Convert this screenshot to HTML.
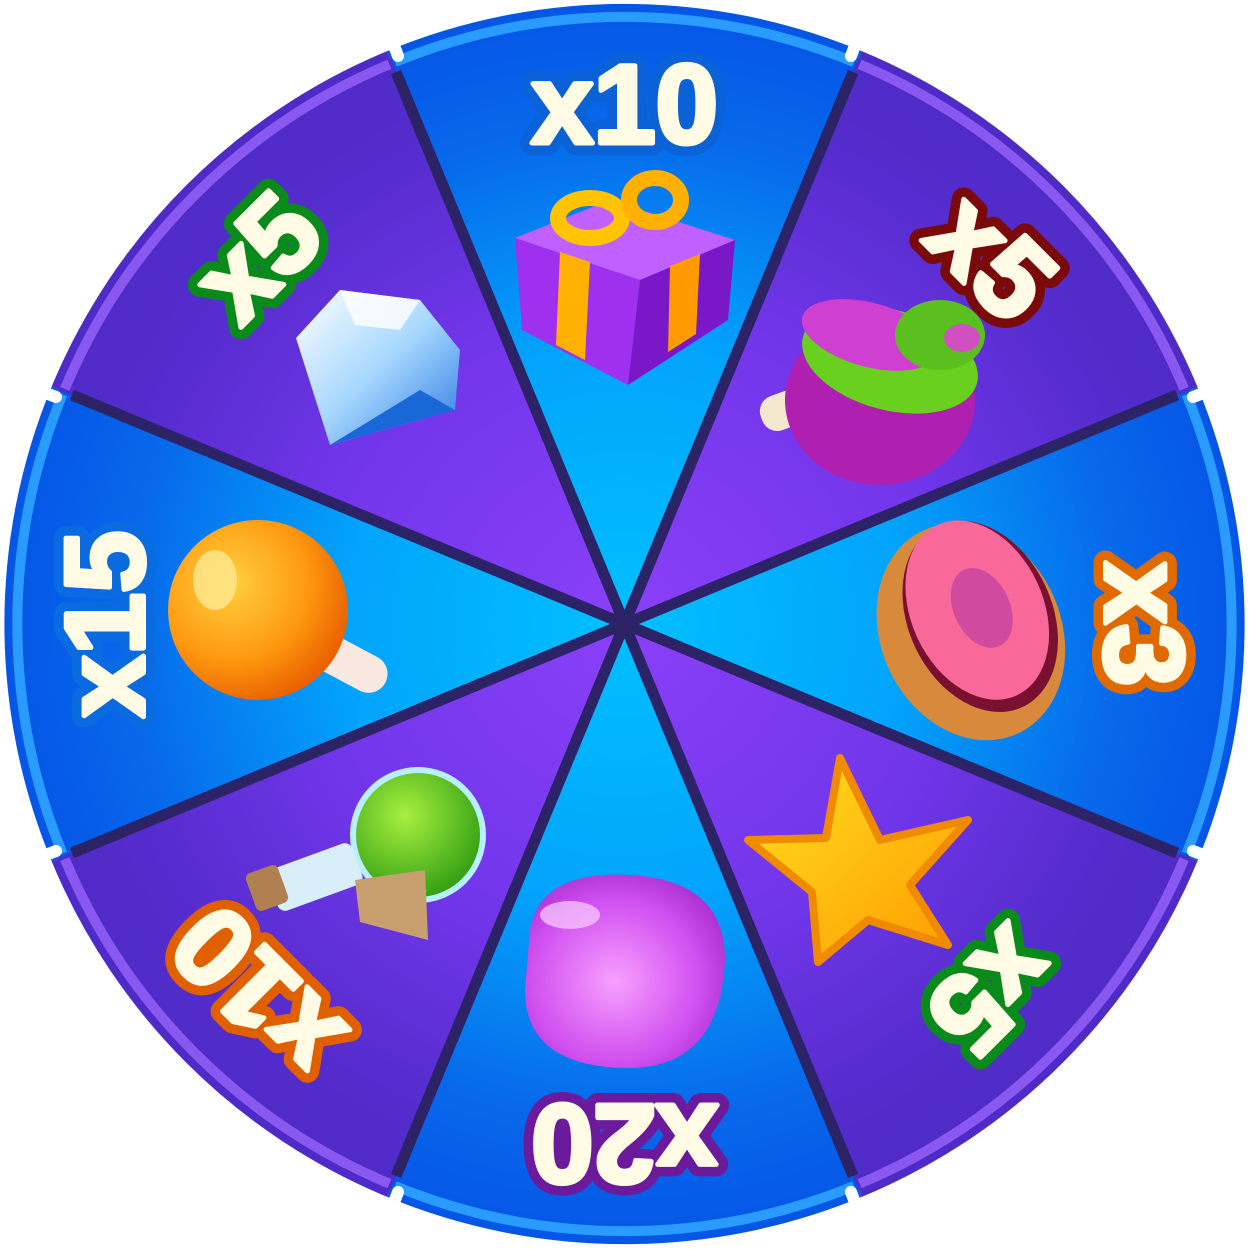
<!DOCTYPE html>
<html><head><meta charset="utf-8"><style>html,body{margin:0;padding:0;background:#fff}svg{display:block}</style></head>
<body>
<svg width="1249" height="1249" viewBox="0 0 1249 1249" xmlns="http://www.w3.org/2000/svg">
<defs>
<radialGradient id="gb" gradientUnits="userSpaceOnUse" cx="624.5" cy="624" r="620">
<stop offset="0" stop-color="#00c0ff"/><stop offset="0.45" stop-color="#03a4fb"/><stop offset="0.8" stop-color="#0768ea"/><stop offset="1" stop-color="#0656e6"/></radialGradient>
<radialGradient id="gp" gradientUnits="userSpaceOnUse" cx="624.5" cy="624" r="620">
<stop offset="0" stop-color="#8a40f8"/><stop offset="0.5" stop-color="#7236ea"/><stop offset="0.85" stop-color="#542ccc"/><stop offset="1" stop-color="#4e2bc6"/></radialGradient>
<radialGradient id="org" cx="0.35" cy="0.35" r="0.7"><stop offset="0" stop-color="#ffd040"/><stop offset="0.6" stop-color="#ff9a10"/><stop offset="1" stop-color="#e86000"/></radialGradient>
<radialGradient id="grn" cx="0.4" cy="0.35" r="0.7"><stop offset="0" stop-color="#a8f040"/><stop offset="1" stop-color="#2c9a10"/></radialGradient>
<radialGradient id="pur" cx="0.45" cy="0.55" r="0.7"><stop offset="0" stop-color="#f8a0ff"/><stop offset="0.6" stop-color="#d050f0"/><stop offset="1" stop-color="#9a20c0"/></radialGradient>
<linearGradient id="str" x1="0" y1="0" x2="1" y2="1"><stop offset="0" stop-color="#ffe020"/><stop offset="1" stop-color="#ff9a00"/></linearGradient>
<linearGradient id="dia" x1="0" y1="0" x2="1" y2="1"><stop offset="0" stop-color="#ffffff"/><stop offset="0.5" stop-color="#a8d8ff"/><stop offset="1" stop-color="#2a78e0"/></linearGradient>
</defs>
<circle cx="624.5" cy="624" r="612" fill="#2c2266"/>
<g>
<path d="M624.5 624 L387.2 51.1 A620 620 0 0 1 861.8 51.1 Z" fill="url(#gb)"/>
<path d="M624.5 624 L387.2 51.1 A620 620 0 0 1 861.8 51.1 Z" fill="url(#gp)" transform="rotate(45 624.5 624)"/>
<path d="M624.5 624 L387.2 51.1 A620 620 0 0 1 861.8 51.1 Z" fill="url(#gb)" transform="rotate(90 624.5 624)"/>
<path d="M624.5 624 L387.2 51.1 A620 620 0 0 1 861.8 51.1 Z" fill="url(#gp)" transform="rotate(135 624.5 624)"/>
<path d="M624.5 624 L387.2 51.1 A620 620 0 0 1 861.8 51.1 Z" fill="url(#gb)" transform="rotate(180 624.5 624)"/>
<path d="M624.5 624 L387.2 51.1 A620 620 0 0 1 861.8 51.1 Z" fill="url(#gp)" transform="rotate(225 624.5 624)"/>
<path d="M624.5 624 L387.2 51.1 A620 620 0 0 1 861.8 51.1 Z" fill="url(#gb)" transform="rotate(270 624.5 624)"/>
<path d="M624.5 624 L387.2 51.1 A620 620 0 0 1 861.8 51.1 Z" fill="url(#gp)" transform="rotate(315 624.5 624)"/>
</g>
<g fill="none" stroke-width="10">
<path d="M395 62 A606 606 0 0 1 854 62" stroke="#2a9cff"/>
<path d="M395 62 A606 606 0 0 1 854 62" stroke="#8858f0" transform="rotate(45 624.5 624)"/>
<path d="M395 62 A606 606 0 0 1 854 62" stroke="#2a9cff" transform="rotate(90 624.5 624)"/>
<path d="M395 62 A606 606 0 0 1 854 62" stroke="#8858f0" transform="rotate(135 624.5 624)"/>
<path d="M395 62 A606 606 0 0 1 854 62" stroke="#2a9cff" transform="rotate(180 624.5 624)"/>
<path d="M395 62 A606 606 0 0 1 854 62" stroke="#8858f0" transform="rotate(225 624.5 624)"/>
<path d="M395 62 A606 606 0 0 1 854 62" stroke="#2a9cff" transform="rotate(270 624.5 624)"/>
<path d="M395 62 A606 606 0 0 1 854 62" stroke="#8858f0" transform="rotate(315 624.5 624)"/>
</g>
<g stroke="#2c2266" stroke-width="11">
<line x1="624.5" y1="624" x2="396" y2="72"/><line x1="624.5" y1="624" x2="853" y2="72"/>
<line x1="624.5" y1="624" x2="72" y2="395"/><line x1="624.5" y1="624" x2="1177" y2="395"/>
<line x1="624.5" y1="624" x2="72" y2="853"/><line x1="624.5" y1="624" x2="1177" y2="853"/>
<line x1="624.5" y1="624" x2="396" y2="1176"/><line x1="624.5" y1="624" x2="853" y2="1176"/>
</g>
<g stroke="#fff" stroke-width="12" stroke-linecap="round">
<line x1="398" y1="56" x2="385" y2="22"/><line x1="851" y1="56" x2="864" y2="22"/>
<line x1="56" y1="397" x2="22" y2="384"/><line x1="1193" y1="397" x2="1227" y2="384"/>
<line x1="56" y1="851" x2="22" y2="864"/><line x1="1193" y1="851" x2="1227" y2="864"/>
<line x1="398" y1="1192" x2="385" y2="1226"/><line x1="851" y1="1192" x2="864" y2="1226"/>
</g>
<g font-family="Liberation Sans, sans-serif" font-weight="bold" font-size="112" text-anchor="middle" stroke-linejoin="round">
<g stroke-width="24">
<text x="624.5" y="143" stroke="#0a62d6" fill="#0a62d6">x10</text>
<text x="624.5" y="143" stroke="#7a0a0a" fill="#7a0a0a" transform="rotate(45 624.5 624)">x5</text>
<text x="624.5" y="143" stroke="#e06a00" fill="#e06a00" transform="rotate(90 624.5 624)">x3</text>
<text x="624.5" y="143" stroke="#0a8a1a" fill="#0a8a1a" transform="rotate(135 624.5 624)">x5</text>
<text x="624.5" y="143" stroke="#6a1a9a" fill="#6a1a9a" transform="rotate(180 624.5 624)">x20</text>
<text x="624.5" y="143" stroke="#e06000" fill="#e06000" transform="rotate(225 624.5 624)">x10</text>
<text x="624.5" y="143" stroke="#0a6ae0" fill="#0a6ae0" transform="rotate(270 624.5 624)">x15</text>
<text x="624.5" y="143" stroke="#0a8a1a" fill="#0a8a1a" transform="rotate(315 624.5 624)">x5</text>
</g>
<g fill="#fffbe4" stroke="#fffbe4" stroke-width="5">
<text x="624.5" y="143">x10</text>
<text x="624.5" y="143" transform="rotate(45 624.5 624)">x5</text>
<text x="624.5" y="143" transform="rotate(90 624.5 624)">x3</text>
<text x="624.5" y="143" transform="rotate(135 624.5 624)">x5</text>
<text x="624.5" y="143" transform="rotate(180 624.5 624)">x20</text>
<text x="624.5" y="143" transform="rotate(225 624.5 624)">x10</text>
<text x="624.5" y="143" transform="rotate(270 624.5 624)">x15</text>
<text x="624.5" y="143" transform="rotate(315 624.5 624)">x5</text>
</g>
</g>
<g>
<path d="M515 238 L610 200 L735 240 L640 280 Z" fill="#c060ff"/>
<path d="M515 238 L640 280 L628 385 L522 330 Z" fill="#a030f0"/>
<path d="M640 280 L735 240 L728 320 L628 385 Z" fill="#7a18c8"/>
<path d="M560 252 L590 262 L585 360 L556 345 Z" fill="#ffb000"/>
<path d="M670 266 L700 254 L696 334 L668 352 Z" fill="#ff9a00"/>
<ellipse cx="590" cy="218" rx="32" ry="20" fill="none" stroke="#ffc400" stroke-width="16"/>
<ellipse cx="655" cy="200" rx="26" ry="22" fill="none" stroke="#ffb000" stroke-width="16"/>
</g>
<g>
<rect x="760" y="392" width="50" height="36" rx="16" fill="#f4e8d0" transform="rotate(-20 785 410)"/>
<ellipse cx="880" cy="400" rx="95" ry="85" fill="#b020b0"/>
<ellipse cx="890" cy="360" rx="90" ry="50" fill="#6ad020" transform="rotate(15 890 360)"/>
<ellipse cx="870" cy="335" rx="70" ry="32" fill="#d040d0" transform="rotate(15 870 335)"/>
<ellipse cx="940" cy="335" rx="45" ry="35" fill="#5ac020"/>
<ellipse cx="962" cy="338" rx="18" ry="14" fill="#d050c0"/>
</g>
<g transform="rotate(-25 970 630)">
<ellipse cx="970" cy="632" rx="90" ry="112" fill="#d88a3c"/>
<ellipse cx="985" cy="622" rx="72" ry="100" fill="#7a1030"/>
<ellipse cx="985" cy="615" rx="66" ry="94" fill="#f86898"/>
<ellipse cx="990" cy="615" rx="28" ry="42" fill="#d04aa0"/>
</g>
<path d="M840 758 L880 840 L968 820 L910 885 L948 945 L868 920 L818 962 L812 892 L748 840 L826 838 Z" fill="url(#str)" stroke="#f08a00" stroke-width="8" stroke-linejoin="round"/>
<path d="M530 930 Q540 870 630 875 Q725 880 725 960 Q720 1070 625 1068 Q525 1066 525 990 Z" fill="url(#pur)"/>
<ellipse cx="570" cy="915" rx="30" ry="14" fill="#fbd0ff" opacity="0.7"/>
<g>
<circle cx="418" cy="835" r="65" fill="url(#grn)" stroke="#b8f0ff" stroke-width="6"/>
<rect x="270" y="855" width="90" height="44" rx="8" fill="#d8eef8" transform="rotate(-20 315 877)"/>
<rect x="250" y="868" width="34" height="40" rx="6" fill="#b08050" transform="rotate(-20 267 888)"/>
<path d="M355 880 L425 870 L428 940 L360 922 Z" fill="#c8a070"/>
</g>
<g>
<rect x="310" y="645" width="80" height="38" rx="19" fill="#f8e8e0" transform="rotate(28 350 664)"/>
<circle cx="258" cy="610" r="90" fill="url(#org)"/>
<ellipse cx="215" cy="580" rx="22" ry="30" fill="#ffe890" opacity="0.8"/>
</g>
<g>
<path d="M296 338 L340 290 L420 300 L460 350 L455 410 L330 445 Z" fill="url(#dia)"/>
<path d="M340 290 L420 300 L400 330 L355 325 Z" fill="#ffffff" opacity="0.8"/>
<path d="M330 445 L455 410 L420 390 Z" fill="#1a68d8"/>
</g>
<circle cx="624.5" cy="624" r="6" fill="#2c2266"/>
</svg>
</body></html>
